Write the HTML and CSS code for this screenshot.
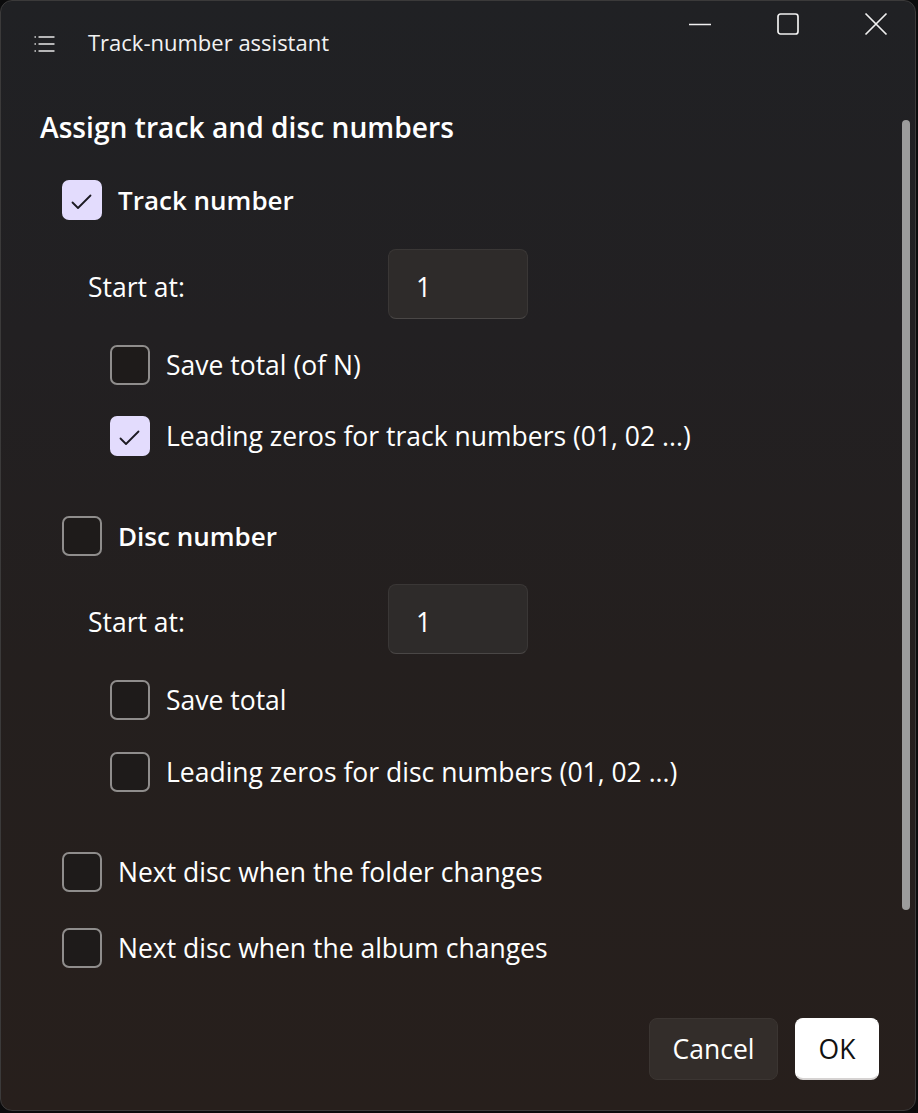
FILE: index.html
```html
<!DOCTYPE html>
<html lang="en">
<head>
<meta charset="utf-8">
<title>Track-number assistant</title>
<link rel="stylesheet" href="styles.css">
</head>
<body>
<div class="window">
  <header class="titlebar">
    <div class="title-left">
      <svg class="menu-icon" width="22" height="18" viewBox="0 0 22 18">
        <g fill="none" stroke="#e8e8e8" stroke-width="1.4" stroke-linecap="round">
          <line x1="1" y1="3" x2="1.4" y2="3"/>
          <line x1="1" y1="10" x2="1.4" y2="10"/>
          <line x1="1" y1="17" x2="1.4" y2="17"/>
          <line x1="5" y1="3" x2="20" y2="3"/>
          <line x1="5" y1="10" x2="20" y2="10"/>
          <line x1="5" y1="17" x2="20" y2="17"/>
        </g>
      </svg>
      <span class="title">Track-number assistant</span>
    </div>
    <div class="controls">
      <div class="ctrl">
        <svg width="24" height="24" viewBox="0 0 24 24"><line x1="1" y1="12.5" x2="23" y2="12.5" stroke="#f0f0f0" stroke-width="1.6"/></svg>
      </div>
      <div class="ctrl">
        <svg width="24" height="24" viewBox="0 0 24 24"><rect x="2" y="2" width="20" height="20" rx="2.5" fill="none" stroke="#f0f0f0" stroke-width="1.7"/></svg>
      </div>
      <div class="ctrl">
        <svg width="24" height="24" viewBox="0 0 24 24"><path d="M1.5 1.5 L22.5 22.5 M22.5 1.5 L1.5 22.5" stroke="#f0f0f0" stroke-width="1.7" fill="none"/></svg>
      </div>
    </div>
  </header>

  <main class="content">
    <h1 class="heading">Assign track and disc numbers</h1>

    <div class="row check-row lvl1 r-track">
      <span class="box checked"><svg viewBox="0 0 40 40"><path d="M10.5 22.5 L16 28 L28.5 15.5" fill="none" stroke="#1c1a22" stroke-width="1.8" stroke-linecap="round" stroke-linejoin="round"/></svg></span>
      <span class="label strong">Track number</span>
    </div>

    <div class="row field-row r-start1">
      <span class="field-label">Start at:</span>
      <div class="input">1</div>
    </div>

    <div class="row check-row lvl2 r-save1">
      <span class="box"></span>
      <span class="label">Save total (of N)</span>
    </div>

    <div class="row check-row lvl2 r-lead1">
      <span class="box checked"><svg viewBox="0 0 40 40"><path d="M10.5 22.5 L16 28 L28.5 15.5" fill="none" stroke="#1c1a22" stroke-width="1.8" stroke-linecap="round" stroke-linejoin="round"/></svg></span>
      <span class="label">Leading zeros for track numbers (01, 02 ...)</span>
    </div>

    <div class="row check-row lvl1 r-disc">
      <span class="box"></span>
      <span class="label strong">Disc number</span>
    </div>

    <div class="row field-row r-start2">
      <span class="field-label">Start at:</span>
      <div class="input">1</div>
    </div>

    <div class="row check-row lvl2 r-save2">
      <span class="box"></span>
      <span class="label">Save total</span>
    </div>

    <div class="row check-row lvl2 r-lead2">
      <span class="box"></span>
      <span class="label">Leading zeros for disc numbers (01, 02 ...)</span>
    </div>

    <div class="row check-row lvl1 r-folder">
      <span class="box"></span>
      <span class="label">Next disc when the folder changes</span>
    </div>

    <div class="row check-row lvl1 r-album">
      <span class="box"></span>
      <span class="label">Next disc when the album changes</span>
    </div>

    <div class="scrollbar"></div>
  </main>

  <footer class="buttons">
    <button class="btn btn-cancel">Cancel</button>
    <button class="btn btn-ok">OK</button>
  </footer>
</div>
</body>
</html>
```
FILE: styles.css
```css
html, body {
  margin: 0;
  padding: 0;
  background: #0b0b0c;
}
body {
  width: 918px;
  height: 1113px;
  overflow: hidden;
  font-family: "Open Sans", "Noto Sans", "Liberation Sans", sans-serif;
  color: #ffffff;
}
.window {
  position: relative;
  width: 916px;
  height: 1111px;
  box-sizing: border-box;
  border: 1px solid #3b3a3a;
  border-radius: 12px;
  background: linear-gradient(180deg, #202124 0%, #222022 30%, #241f1e 60%, #271f1c 100%);
  display: flex;
  flex-direction: column;
  overflow: hidden;
}
.titlebar {
  height: 87px;
  display: flex;
  justify-content: space-between;
  align-items: flex-start;
  flex: none;
}
.title-left {
  display: flex;
  align-items: center;
  height: 84px;
  padding-left: 33px;
}
.menu-icon {
  display: block;
  margin-right: 32px;
}
.title {
  font-size: 22px;
  color: #f2f2f2;
  position: relative;
  top: -1px;
}
.controls {
  display: flex;
  margin-right: -5px;
}
.ctrl {
  width: 88px;
  height: 46px;
  display: flex;
  align-items: center;
  justify-content: center;
}
.ctrl svg {
  display: block;
}
.content {
  position: relative;
  flex: 1;
  padding-left: 39px;
}
.heading {
  margin: 21px 0 0 0;
  font-size: 28.2px;
  line-height: 36px;
  font-weight: 600;
  height: 36px;
}
.row {
  display: flex;
  align-items: center;
}
.check-row {
  height: 40px;
}
.lvl1 { padding-left: 22px; }
.lvl2 { padding-left: 70px; }
.box {
  width: 40px;
  height: 40px;
  box-sizing: border-box;
  border: 2px solid #8f8d8c;
  border-radius: 7px;
  background: #1e1b1a;
  flex: none;
  margin-right: 16px;
}
.box.checked {
  border: none;
  background: #e3dcfd;
}
.box svg {
  display: block;
  width: 40px;
  height: 40px;
}
.label {
  font-size: 26.5px;
  color: #ffffff;
}
.label.strong {
  font-size: 26px;
  font-weight: 600;
}
.field-row {
  height: 70px;
  padding-left: 48px;
}
.field-label {
  font-size: 26.5px;
  width: 300px;
  position: relative;
  top: 3px;
}
.input {
  width: 140px;
  height: 70px;
  box-sizing: border-box;
  padding-left: 27px;
  padding-top: 5px;
  border: 1px solid #3a3736;
  border-bottom-color: #4a4746;
  border-radius: 8px;
  background: #2e2b2a;
  font-size: 26.5px;
  display: flex;
  align-items: center;
}
.r-track { margin-top: 35px; }
.r-start1 { margin-top: 29px; }
.r-save1 { margin-top: 26px; }
.r-lead1 { margin-top: 31px; }
.r-disc { margin-top: 60px; }
.r-start2 { margin-top: 28px; }
.r-save2 { margin-top: 26px; }
.r-lead2 { margin-top: 32px; }
.r-folder { margin-top: 60px; }
.r-album { margin-top: 36px; }

.scrollbar {
  position: absolute;
  left: 901px;
  top: 32px;
  width: 8px;
  height: 790px;
  border-radius: 4px;
  background: #9c9c9c;
}
.buttons {
  flex: none;
  display: flex;
  justify-content: flex-end;
  gap: 17px;
  padding: 0 36px 30px 0;
}
.btn {
  height: 62px;
  border-radius: 8px;
  font-family: inherit;
  font-size: 26.5px;
  padding: 0;
}
.btn-cancel {
  width: 129px;
  background: #332d2a;
  border: 1px solid #3b3532;
  color: #ffffff;
}
.btn-ok {
  width: 84px;
  background: #ffffff;
  border: 1px solid #ffffff;
  border-bottom: 2px solid #d6d3d2;
  color: #111111;
}
```
